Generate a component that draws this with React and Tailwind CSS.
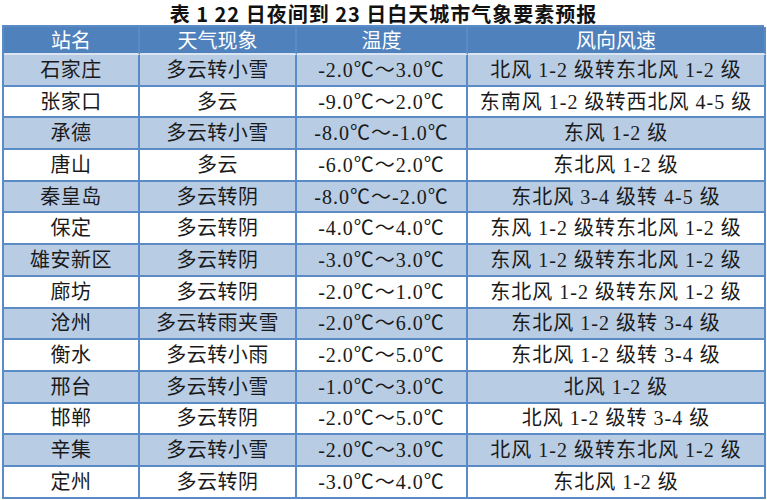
import React from "react";

const rows = [
  ["石家庄", "多云转小雪", "-2.0℃～3.0℃", "北风 1-2 级转东北风 1-2 级"],
  ["张家口", "多云", "-9.0℃～2.0℃", "东南风 1-2 级转西北风 4-5 级"],
  ["承德", "多云转小雪", "-8.0℃～-1.0℃", "东风 1-2 级"],
  ["唐山", "多云", "-6.0℃～2.0℃", "东北风 1-2 级"],
  ["秦皇岛", "多云转阴", "-8.0℃～-2.0℃", "东北风 3-4 级转 4-5 级"],
  ["保定", "多云转阴", "-4.0℃～4.0℃", "东风 1-2 级转东北风 1-2 级"],
  ["雄安新区", "多云转阴", "-3.0℃～3.0℃", "东风 1-2 级转东北风 1-2 级"],
  ["廊坊", "多云转阴", "-2.0℃～1.0℃", "东北风 1-2 级转东风 1-2 级"],
  ["沧州", "多云转雨夹雪", "-2.0℃～6.0℃", "东北风 1-2 级转 3-4 级"],
  ["衡水", "多云转小雨", "-2.0℃～5.0℃", "东北风 1-2 级转 3-4 级"],
  ["邢台", "多云转小雪", "-1.0℃～3.0℃", "北风 1-2 级"],
  ["邯郸", "多云转阴", "-2.0℃～5.0℃", "北风 1-2 级转 3-4 级"],
  ["辛集", "多云转小雪", "-2.0℃～3.0℃", "北风 1-2 级转东北风 1-2 级"],
  ["定州", "多云转阴", "-3.0℃～4.0℃", "东北风 1-2 级"],
];

const cols = "grid grid-cols-[136px_157px_171px_298px]";
const cell =
  "flex items-center justify-center border-r-2 border-b-2 border-[#5b8bc7] whitespace-nowrap";

export default function App() {
  return (
    <div className="w-[767px] h-[500px] bg-white overflow-hidden">
      <div className="h-[25px] pt-[4px] text-center font-['Noto_Sans_CJK_SC',sans-serif] font-bold text-[20px] leading-[20px] text-[#111] tracking-[1px]">
        表 1 22 日夜间到 23 日白天城市气象要素预报
      </div>
      <div className="ml-[2px] w-[762px] border-l-2 border-t-2 border-[#5b8bc7]">
        <div className={`${cols} h-[28px] bg-[#4f81bd] text-white text-[20px] leading-[26px] font-['Noto_Sans_CJK_SC',sans-serif]`}>
          {["站名", "天气现象", "温度", "风向风速"].map((h) => (
            <div key={h} className={`${cell} border-b-[#dbe5f1]`}>
              {h}
            </div>
          ))}
        </div>
        {rows.map((r, i) => (
          <div
            key={i}
            className={`${cols} h-[31.7px] text-[20px] leading-[28px] text-[#1a1a1a] font-['Liberation_Serif','Noto_Sans_CJK_SC',serif] ${
              i % 2 === 0 ? "bg-[#b8cce4]" : "bg-white"
            }`}
          >
            {r.map((c, j) => (
              <div
                key={j}
                className={`${cell} ${j >= 2 ? "tracking-[1px]" : "tracking-[0.5px]"}`}
              >
                {c}
              </div>
            ))}
          </div>
        ))}
      </div>
    </div>
  );
}
